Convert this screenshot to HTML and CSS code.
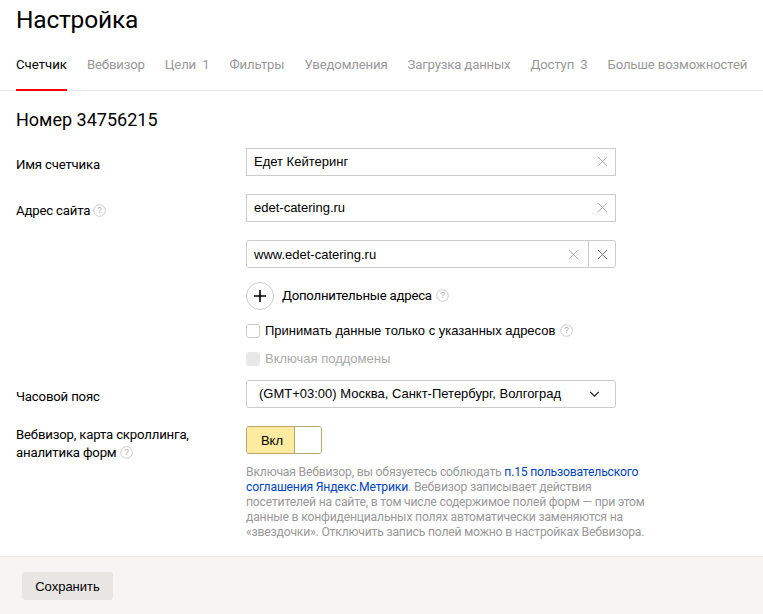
FILE: index.html
```html
<!DOCTYPE html>
<html lang="ru">
<head>
<meta charset="utf-8">
<title>Настройка</title>
<link rel="stylesheet" href="styles.css">
</head>
<body>
<main class="page">
  <h1 class="title">Настройка</h1>
  <nav class="tabs">
    <a class="tab tab-active">Счетчик</a>
    <a class="tab">Вебвизор</a>
    <a class="tab">Цели&nbsp;&nbsp;1</a>
    <a class="tab">Фильтры</a>
    <a class="tab">Уведомления</a>
    <a class="tab">Загрузка данных</a>
    <a class="tab">Доступ&nbsp;&nbsp;3</a>
    <a class="tab">Больше возможностей</a>
  </nav>
  <h2 class="number">Номер 34756215</h2>
  <form class="form">
    <div class="label label-name">Имя счетчика</div>
    <div class="field field-name">
      <div class="input"><span class="value">Едет Кейтеринг</span><svg class="x" viewBox="0 0 12 12"><path d="M1 1l10 10M11 1L1 11"/></svg></div>
    </div>

    <div class="label label-site">Адрес сайта <svg class="help" viewBox="0 0 13 13"><circle cx="6.5" cy="6.5" r="5.8"/><text x="6.5" y="9.4" text-anchor="middle">?</text></svg></div>
    <div class="field field-site">
      <div class="input"><span class="value">edet-catering.ru</span><svg class="x" viewBox="0 0 12 12"><path d="M1 1l10 10M11 1L1 11"/></svg></div>
      <div class="input input-double"><span class="value">www.edet-catering.ru</span><svg class="x x-inner" viewBox="0 0 12 12"><path d="M1 1l10 10M11 1L1 11"/></svg><span class="remove"><svg class="x x-dark" viewBox="0 0 12 12"><path d="M1 1l10 10M11 1L1 11"/></svg></span></div>
      <div class="more"><span class="plus"><svg viewBox="0 0 12 12"><path d="M6 0v12M0 6h12"/></svg></span><span>Дополнительные адреса</span><svg class="help" viewBox="0 0 13 13"><circle cx="6.5" cy="6.5" r="5.8"/><text x="6.5" y="9.4" text-anchor="middle">?</text></svg></div>
      <div class="check"><span class="box"></span><span class="check-text">Принимать данные только с указанных адресов</span><svg class="help" viewBox="0 0 13 13"><circle cx="6.5" cy="6.5" r="5.8"/><text x="6.5" y="9.4" text-anchor="middle">?</text></svg></div>
      <div class="check check-off"><span class="box"></span><span class="check-text">Включая поддомены</span></div>
    </div>

    <div class="label label-tz">Часовой пояс</div>
    <div class="field">
      <div class="select"><span>(GMT+03:00) Москва, Санкт-Петербург, Волгоград</span><svg class="chev" viewBox="0 0 12 7"><path d="M1 1l5 5 5-5"/></svg></div>
    </div>

    <div class="label label-web">Вебвизор, карта скроллинга,<br>аналитика форм <svg class="help" viewBox="0 0 13 13"><circle cx="6.5" cy="6.5" r="5.8"/><text x="6.5" y="9.4" text-anchor="middle">?</text></svg></div>
    <div class="field">
      <div class="toggle"><span class="toggle-on">Вкл</span><span class="toggle-knob"></span></div>
      <p class="note">Включая Вебвизор, вы обязуетесь соблюдать <a class="link">п.15 пользовательского соглашения Яндекс.Метрики</a>. Вебвизор записывает действия посетителей на сайте, в том числе содержимое полей форм — при этом данные в конфиденциальных полях автоматически заменяются на «звездочки». Отключить запись полей можно в настройках Вебвизора.</p>
    </div>
  </form>
</main>
<footer class="footer"><button class="save" type="button">Сохранить</button></footer>
</body>
</html>
```
FILE: styles.css
```css
* { box-sizing: border-box; }
html, body { margin: 0; height: 100%; }
body {
  width: 763px;
  height: 614px;
  overflow: hidden;
  background: #fff;
  color: #000;
  font-family: Roboto, "Noto Sans", sans-serif;
  display: flex;
  flex-direction: column;
}
.page { flex: 1; }
.title {
  margin: 0;
  padding: 4px 0 0 16px;
  font-size: 24.5px;
  letter-spacing: -0.2px;
  line-height: 32px;
  font-weight: 400;
  height: 44px;
}
.tabs {
  display: flex;
  gap: 20px;
  height: 47px;
  padding-left: 16px;
  border-bottom: 1px solid #e8e8e8;
  white-space: nowrap;
}
.tab {
  font-size: 13.2px;
  letter-spacing: -0.17px;
  line-height: 18px;
  padding-top: 12px;
  color: #999;
  height: 47px;
}
.tab-active { color: #000; letter-spacing: 0; border-bottom: 2px solid #f00; }
.number {
  margin: 0;
  padding: 18px 0 0 16px;
  font-size: 18px;
  line-height: 22px;
  font-weight: 400;
  height: 57px;
}
.form {
  display: grid;
  grid-template-columns: 230px 370px;
  padding-left: 16px;
  font-size: 13.2px;
}
.label { line-height: 18px; letter-spacing: -0.18px; }
.label-name { padding-top: 8px; }
.field-name { margin-bottom: 18px; }
.label-site { padding-top: 8px; }
.label-tz { padding-top: 8px; }
.label-web { padding-top: 0; }
.field { display: flex; flex-direction: column; align-items: flex-start; }
.field-site { gap: 18px; }
.input, .select {
  width: 370px;
  height: 28px;
  border: 1px solid #ccc;
  display: flex;
  align-items: center;
  padding-left: 7px;
  padding-bottom: 1px;
  font-family: "Liberation Sans", Arial, sans-serif;
  font-size: 13px;
  background: #fff;
}
.input { padding-right: 7px; }
.value { flex: 1; }
.input-double { border-radius: 3px; padding-right: 0; padding-bottom: 0; }
.x { width: 11px; height: 11px; fill: none; stroke: #aaa; stroke-width: 1; display: block; }
.x-inner { margin-right: 9px; }
.x-dark { stroke: #666; }
.remove {
  width: 27px;
  height: 26px;
  border-left: 1px solid #ccc;
  display: flex;
  align-items: center;
  justify-content: center;
}
.help { width: 13px; height: 13px; vertical-align: -2px; overflow: visible; }
.help circle { fill: none; stroke: #ccc; stroke-width: 1; }
.help text { font-family: "Liberation Sans", sans-serif; font-size: 8.5px; letter-spacing: 0; fill: #aaa; }
.more {
  display: flex;
  align-items: center;
  gap: 8px;
  height: 28px;
  margin-top: -5px;
  margin-bottom: 1px;
  font-size: 13.2px;
  letter-spacing: -0.23px;
}
.more span:nth-child(2) { margin-right: -4px; }
.plus {
  width: 28px;
  height: 28px;
  margin-top: 2px;
  border: 1px solid #ccc;
  border-radius: 50%;
  display: flex;
  align-items: center;
  justify-content: center;
}
.plus svg { width: 12px; height: 12px; stroke: #000; stroke-width: 1.6; fill: none; display: block; }
.check {
  display: flex;
  align-items: center;
  height: 17px;
  font-family: "Liberation Sans", Arial, sans-serif;
  font-size: 13px;
  margin-top: -6px;
}
.check-off { margin-top: -7px; color: #aaa; margin-bottom: 13px; }
.box {
  width: 14px;
  height: 14px;
  border: 1px solid #ccc;
  border-radius: 3px;
  margin-right: 5px;
  flex: none;
}
.check-off .box { background: #e8e8e8; border-color: #e8e8e8; }
.check-text { margin-right: 5px; }
.select {
  border-radius: 3px;
  padding: 0 15px 1px 12px;
  justify-content: space-between;
  font-size: 13px;
  margin-bottom: 18px;
}
.chev { width: 11px; height: 6px; fill: none; stroke: #222; stroke-width: 1.5; display: block; }
.toggle {
  width: 76px;
  height: 28px;
  display: flex;
  border: 1px solid #b8a76a;
  border-radius: 3px;
  overflow: hidden;
  font-family: "Liberation Sans", Arial, sans-serif;
  font-size: 13px;
}
.toggle-on {
  width: 47px;
  padding-left: 3px;
  background: #ffeba0;
  display: flex;
  align-items: center;
  justify-content: center;
}
.toggle-knob { flex: 1; background: #fff; border-left: 1px solid #b8a76a; }
.note {
  margin: 11px 0 0;
  width: 406px;
  font-size: 12.2px;
  letter-spacing: -0.2px;
  line-height: 15px;
  color: #999;
}
.link { color: #04b; }
.footer {
  height: 58px;
  flex: none;
  background: #f6f5f3;
  border-top: 1px solid #e8e8e8;
  padding: 15px 0 0 22px;
}
.save {
  width: 91px;
  height: 28px;
  border: 0;
  border-radius: 3px;
  background: #e8e6e3;
  color: #000;
  font-family: "Liberation Sans", Arial, sans-serif;
  font-size: 13px;
  padding: 0;
}
```
